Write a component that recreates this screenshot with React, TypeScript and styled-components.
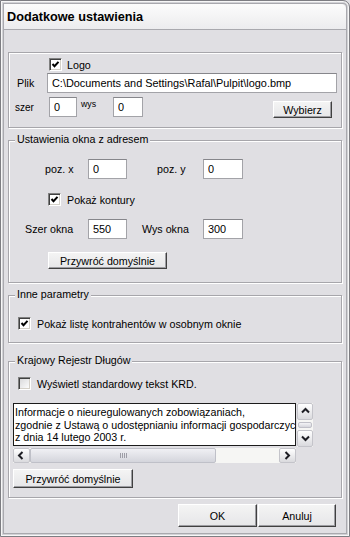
import styled, { createGlobalStyle } from 'styled-components';

const GlobalStyle = createGlobalStyle`
  html, body {
    margin: 0;
    padding: 0;
    background: #e0dfe3;
  }
  body {
    font-family: "Liberation Sans", Arial, sans-serif;
    font-size: 10.7px;
    color: #000;
  }
  * {
    box-sizing: border-box;
  }
`;

const Window = styled.div`
  width: 350px;
  height: 537px;
  border: 1px solid #7d7d82;
  border-top-right-radius: 7px;
  padding: 3px;
  background: #e0dfe3;
  box-shadow: inset 0 0 0 1px #f7f7f7, inset 0 0 0 2px #d2d2d6, inset 0 0 0 3px #a9a9ae;
  display: flex;
  flex-direction: column;
  overflow: hidden;
`;

const TitleBar = styled.div`
  height: 26px;
  flex: none;
  display: flex;
  align-items: center;
  padding-left: 3px;
  background: linear-gradient(#fcfcfc, #ececee);
  border-bottom: 1px solid #a9a9ae;
  border-top-right-radius: 5px;
  font-size: 12.7px;
  font-weight: bold;
`;

const Body = styled.div`
  flex: 1;
  display: flex;
  flex-direction: column;
  padding: 22px 4px 0;
`;

const Group = styled.div<{ $h: number; $mt?: number }>`
  position: relative;
  flex: none;
  height: ${({ $h }) => $h}px;
  margin-top: ${({ $mt }) => $mt ?? 0}px;
  border: 1px solid #a7a6ab;
  box-shadow: inset 1px 1px 0 #fff, 1px 1px 0 #fff;
  display: flex;
  flex-direction: column;
`;

const Caption = styled.span`
  position: absolute;
  top: -8px;
  left: 6px;
  padding: 0 2px;
  line-height: 13px;
  background: #e0dfe3;
  white-space: nowrap;
`;

const Row = styled.div<{ $mt: number; $h: number; $pl?: number }>`
  flex: none;
  display: flex;
  align-items: center;
  margin-top: ${({ $mt }) => $mt}px;
  height: ${({ $h }) => $h}px;
  padding-left: ${({ $pl }) => $pl ?? 0}px;
`;

const Label = styled.span<{ $w?: number; $pl?: number; $ml?: number; $size?: number }>`
  flex: none;
  white-space: nowrap;
  width: ${({ $w }) => ($w ? `${$w}px` : 'auto')};
  padding-left: ${({ $pl }) => $pl ?? 0}px;
  margin-left: ${({ $ml }) => $ml ?? 0}px;
  font-size: ${({ $size }) => $size ?? 10.7}px;
`;

const RaisedLabel = styled(Label)`
  align-self: flex-start;
  margin-top: 2px;
  line-height: 10px;
`;

const TextBox = styled.input<{ $w: number }>`
  flex: none;
  width: ${({ $w }) => $w}px;
  height: 20px;
  margin: 0;
  padding: 0 0 0 4px;
  border: 1px solid #a3a3a8;
  border-top-color: #86868b;
  background: #fff;
  font: inherit;
  font-size: 10.9px;
  color: #000;
  outline: none;
  align-self: flex-start;
`;

const Button = styled.button<{ $w: number; $h: number }>`
  flex: none;
  width: ${({ $w }) => $w}px;
  height: ${({ $h }) => $h}px;
  margin: 0;
  padding: 0;
  font: inherit;
  font-size: 10.7px;
  color: #000;
  background: linear-gradient(#f4f4f4, #e6e6e8);
  border: 1px solid;
  border-color: #ffffff #404040 #404040 #ffffff;
  box-shadow: inset -1px -1px 0 #9d9da2;
`;

const SideButton = styled(Button)`
  margin-left: auto;
  margin-right: 9px;
  align-self: flex-end;
`;

const Box = styled.span<{ $checked?: boolean }>`
  flex: none;
  width: 13px;
  height: 13px;
  display: inline-flex;
  align-items: center;
  justify-content: center;
  border: 1px solid;
  border-color: #808080 #ffffff #ffffff #808080;
  box-shadow: inset 1px 1px 0 #404040, inset -1px -1px 0 #d4d0c8;
  background: ${({ $checked }) => ($checked ? '#fff' : 'linear-gradient(135deg, #d6d6d8, #ffffff)')};
`;

function CheckBox({ checked }: { checked?: boolean }) {
  return (
    <Box $checked={checked}>
      {checked && (
        <svg width="9" height="9" viewBox="0 0 9 9">
          <polyline points="1.5,4 3.5,6.2 7.5,1.8" fill="none" stroke="#000" strokeWidth="2" />
        </svg>
      )}
    </Box>
  );
}

const MemoRow = styled.div`
  flex: none;
  display: flex;
  align-items: flex-start;
  margin-top: 13px;
  padding-left: 4px;
`;

const MemoColumn = styled.div`
  display: flex;
  flex-direction: column;
  gap: 2px;
`;

const MemoArea = styled.div`
  width: 283px;
  height: 43px;
  background: #fff;
  border: 1px solid #1b1b1b;
  padding: 2px 1px;
  line-height: 12.5px;
  white-space: pre;
  overflow: hidden;
`;

const HScroll = styled.div`
  width: 283px;
  height: 15px;
  display: flex;
  background: #f6f6f4;
`;

const VScroll = styled.div`
  width: 16px;
  height: 44px;
  margin-left: 1px;
  display: flex;
  flex-direction: column;
  align-items: center;
  background: #f6f6f4;
`;

const ScrollButton = styled.div<{ $w: number; $h: number }>`
  flex: none;
  width: ${({ $w }) => $w}px;
  height: ${({ $h }) => $h}px;
  display: flex;
  align-items: center;
  justify-content: center;
  border: 1px solid #c4c4ca;
  border-radius: 2px;
  background: linear-gradient(#ffffff, #dadade);
`;

const VTrack = styled.div`
  flex: 1;
  width: 100%;
  display: flex;
  align-items: center;
  justify-content: center;
`;

const VThumb = styled.div`
  width: 14px;
  height: 6px;
  border: 1px solid #c0c0c8;
  border-radius: 2px;
  background: linear-gradient(#f4f4f6, #d6d6dc);
`;

const HThumb = styled.div<{ $w: number }>`
  flex: none;
  width: ${({ $w }) => $w}px;
  height: 15px;
  display: flex;
  align-items: center;
  justify-content: center;
  border: 1px solid #bfc0c8;
  border-radius: 2px;
  background: linear-gradient(#f0f0f4, #d4d5dc);
`;

const Grip = styled.span`
  width: 7px;
  height: 5px;
  background: repeating-linear-gradient(90deg, #9d9da6 0 1px, transparent 1px 2px);
`;

const HTrack = styled.div`
  flex: 1;
`;

const Footer = styled.div`
  flex: none;
  display: flex;
  justify-content: flex-end;
  gap: 1px;
  margin-top: 6px;
  padding-right: 6px;
`;

function Arrow({ dir }: { dir: 'up' | 'down' | 'left' | 'right' }) {
  const points = {
    up: '1,5.5 4.5,2 8,5.5',
    down: '1,2.5 4.5,6 8,2.5',
    left: '5.5,1 2,4.5 5.5,8',
    right: '2.5,1 6,4.5 2.5,8',
  }[dir];
  return (
    <svg width="9" height="9" viewBox="0 0 9 9">
      <polyline points={points} fill="none" stroke="#1e1e24" strokeWidth="2" />
    </svg>
  );
}

const memoText =
  'Informacje o nieuregulowanych zobowiązaniach,\nzgodnie z Ustawą o udostępnianiu informacji gospodarczych\nz dnia 14 lutego 2003 r.';

export default function App() {
  return (
    <>
      <GlobalStyle />
      <Window>
        <TitleBar>Dodatkowe ustawienia</TitleBar>
        <Body>
          <Group $h={76}>
            <Row $mt={5} $h={13} $pl={40}>
              <CheckBox checked />
              <Label $ml={5}>Logo</Label>
            </Row>
            <Row $mt={2} $h={20}>
              <Label $w={38} $pl={8}>Plik</Label>
              <TextBox $w={290} readOnly value="C:\Documents and Settings\Rafal\Pulpit\logo.bmp" />
            </Row>
            <Row $mt={4} $h={21}>
              <Label $w={40} $pl={6} $size={10}>szer</Label>
              <TextBox $w={28} readOnly value="0" />
              <RaisedLabel $w={32} $ml={4} $size={8.8}>wys</RaisedLabel>
              <TextBox $w={30} readOnly value="0" />
              <SideButton $w={59} $h={17}>Wybierz</SideButton>
            </Row>
          </Group>

          <Group $h={143} $mt={12}>
            <Caption>Ustawienia okna z adresem</Caption>
            <Row $mt={18} $h={20}>
              <Label $w={79} $pl={36}>poz. x</Label>
              <TextBox $w={39} readOnly value="0" />
              <Label $w={46} $ml={30}>poz. y</Label>
              <TextBox $w={40} readOnly value="0" />
            </Row>
            <Row $mt={14} $h={13} $pl={39}>
              <CheckBox checked />
              <Label $ml={6}>Pokaż kontury</Label>
            </Row>
            <Row $mt={13} $h={20}>
              <Label $w={79} $pl={16}>Szer okna</Label>
              <TextBox $w={39} readOnly value="550" />
              <Label $w={61} $ml={15}>Wys okna</Label>
              <TextBox $w={40} readOnly value="300" />
            </Row>
            <Row $mt={13} $h={17} $pl={39}>
              <Button $w={119} $h={17}>Przywróć domyślnie</Button>
            </Row>
          </Group>

          <Group $h={48} $mt={12}>
            <Caption>Inne parametry</Caption>
            <Row $mt={21} $h={13} $pl={9}>
              <CheckBox checked />
              <Label $ml={6}>Pokaż listę kontrahentów w osobnym oknie</Label>
            </Row>
          </Group>

          <Group $h={137} $mt={18}>
            <Caption>Krajowy Rejestr Długów</Caption>
            <Row $mt={15} $h={13} $pl={9}>
              <CheckBox />
              <Label $ml={6}>Wyświetl standardowy tekst KRD.</Label>
            </Row>
            <MemoRow>
              <MemoColumn>
                <MemoArea>{memoText}</MemoArea>
                <HScroll>
                  <ScrollButton $w={17} $h={15}>
                    <Arrow dir="left" />
                  </ScrollButton>
                  <HThumb $w={186}>
                    <Grip />
                  </HThumb>
                  <HTrack />
                  <ScrollButton $w={17} $h={15}>
                    <Arrow dir="right" />
                  </ScrollButton>
                </HScroll>
              </MemoColumn>
              <VScroll>
                <ScrollButton $w={16} $h={17}>
                  <Arrow dir="up" />
                </ScrollButton>
                <VTrack>
                  <VThumb />
                </VTrack>
                <ScrollButton $w={16} $h={17}>
                  <Arrow dir="down" />
                </ScrollButton>
              </VScroll>
            </MemoRow>
            <Row $mt={6} $h={19} $pl={4}>
              <Button $w={120} $h={19}>Przywróć domyślnie</Button>
            </Row>
          </Group>

          <Footer>
            <Button $w={79} $h={23}>OK</Button>
            <Button $w={78} $h={23}>Anuluj</Button>
          </Footer>
        </Body>
      </Window>
    </>
  );
}
